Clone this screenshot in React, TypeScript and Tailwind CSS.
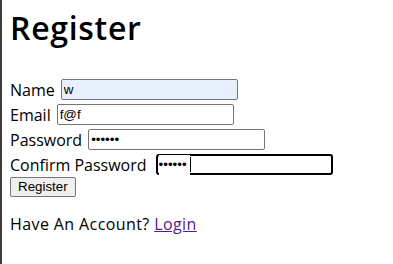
import { useState } from 'react';

const rows = [
  { label: 'Name', type: 'text', value: 'w', autofill: true },
  { label: 'Email', type: 'email', value: 'f@f', autofill: false },
  { label: 'Password', type: 'password', value: '123456', autofill: false },
];

export default function App() {
  const [confirm, setConfirm] = useState('123456');

  return (
    <div className="flex h-[264px] w-[393px] bg-white text-black overflow-hidden">
      <div className="w-[2px] shrink-0 bg-[#3b3b3b]" />
      <div className="flex flex-col pl-2 font-['Open_Sans',sans-serif] text-[16px]">
        <h1 className="mt-[9px] mb-[30px] text-[32px] leading-[38px] font-semibold tracking-[0.7px]">Register</h1>
        {rows.map((row) => (
          <div key={row.label} className="flex h-[25px] items-center gap-[6px]">
            <label className="leading-[22px]">{row.label}</label>
            <input
              type={row.type}
              defaultValue={row.value}
              className={
                'h-[21px] w-[177px] rounded-[2px] border border-[#767676] px-[2px] font-["Liberation_Sans",Arial,sans-serif] text-[13.33px] outline-none ' +
                (row.autofill ? 'bg-[#e8f0fe]' : 'bg-white')
              }
            />
          </div>
        ))}
        <div className="flex h-[25px] items-center gap-[9px]">
          <label className="leading-[22px]">Confirm Password</label>
          <div className="flex h-[21px] w-[177px] items-center rounded-[3px] border-2 border-black px-[1px]">
            <input
              type="password"
              value={confirm}
              onChange={(e) => setConfirm(e.target.value)}
              className="w-[31px] bg-white font-['Liberation_Sans',Arial,sans-serif] text-[13.33px] outline-none"
            />
            <span className="h-[15px] w-[1px] bg-black" />
          </div>
        </div>
        <div className="flex">
          <button
            type="button"
            className="h-[20px] rounded-[2px] border border-[#767676] bg-[#efefef] px-[7px] font-['Liberation_Sans',Arial,sans-serif] text-[13.33px] leading-[16px]"
          >
            Register
          </button>
        </div>
        <p className="mt-[16px] leading-[22px] tracking-[0.4px]">
          Have An Account?{' '}
          <a href="#login" className="text-[#551a8b] underline">
            Login
          </a>
        </p>
      </div>
    </div>
  );
}
